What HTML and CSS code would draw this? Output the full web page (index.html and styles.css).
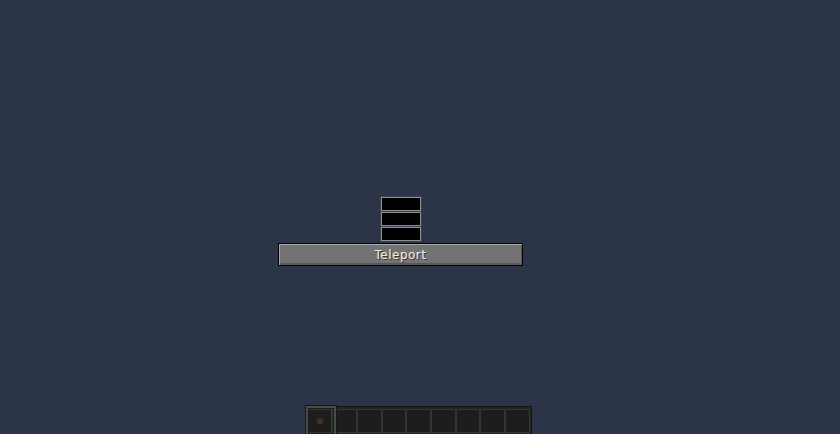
FILE: index.html
```html
<!DOCTYPE html>
<html>
<head>
<meta charset="utf-8">
<link rel="stylesheet" href="styles.css">
</head>
<body>
<div class="screen">
  <div class="form-area">
    <div class="form">
      <div class="field"></div>
      <div class="field"></div>
      <div class="field"></div>
      <div class="button"><span class="label">Teleport</span></div>
    </div>
  </div>
  <div class="hotbar-area">
    <div class="hotbar">
      <div class="slot"><span class="item"></span></div>
      <div class="slot"></div>
      <div class="slot"></div>
      <div class="slot"></div>
      <div class="slot"></div>
      <div class="slot"></div>
      <div class="slot"></div>
      <div class="slot"></div>
      <div class="slot"></div>
      <div class="selected"></div>
    </div>
  </div>
</div>
</body>
</html>
```
FILE: styles.css
```css
html, body {
  margin: 0;
  padding: 0;
  background: #2c3448;
}
.screen {
  width: 840px;
  height: 434px;
  display: flex;
  flex-direction: column;
  overflow: hidden;
}
.form-area {
  padding-top: 197px;
  padding-right: 39px;
  display: flex;
  justify-content: center;
}
.form {
  display: flex;
  flex-direction: column;
  align-items: center;
  gap: 1px;
}
.field {
  width: 38px;
  height: 12px;
  background: #000000;
  border: 1px solid #8e8e8e;
  box-shadow: 0 0 0 1px #3b4252;
}
.button {
  margin-top: 1px;
  width: 243px;
  height: 21px;
  border: 1px solid #000000;
  background: #737373;
  box-shadow: inset 1px 1px 0 #a8a8a8, inset -1px -2px 0 #575757;
  display: flex;
  align-items: center;
  justify-content: center;
}
.label {
  font-family: "DejaVu Sans", sans-serif;
  font-size: 12px;
  color: #f0f0f0;
  text-shadow: 1px 1px 0 #3a3a3a;
  letter-spacing: 0.5px;
}
.hotbar-area {
  margin-top: auto;
  display: flex;
  justify-content: center;
  padding-right: 3px;
}
.hotbar {
  position: relative;
  height: 28px;
  width: 226px;
  background: #232623;
  border: 1px solid #111311;
  border-bottom: none;
  display: flex;
  padding: 2px 1px 0 1px;
  box-sizing: border-box;
}
.slot {
  flex: 1;
  height: 24px;
  background: #1b1e1b;
  border: 1px solid #333633;
  box-sizing: border-box;
  display: flex;
  align-items: center;
  justify-content: center;
}
.item {
  width: 6px;
  height: 6px;
  background: #4a2a22;
  border-radius: 2px;
}
.selected {
  position: absolute;
  left: -1px;
  top: -1px;
  width: 30px;
  height: 30px;
  border: 2px solid #484b48;
  box-shadow: inset 0 0 0 1px #1a1c1a, 0 0 0 1px #151715;
  box-sizing: border-box;
}
```
